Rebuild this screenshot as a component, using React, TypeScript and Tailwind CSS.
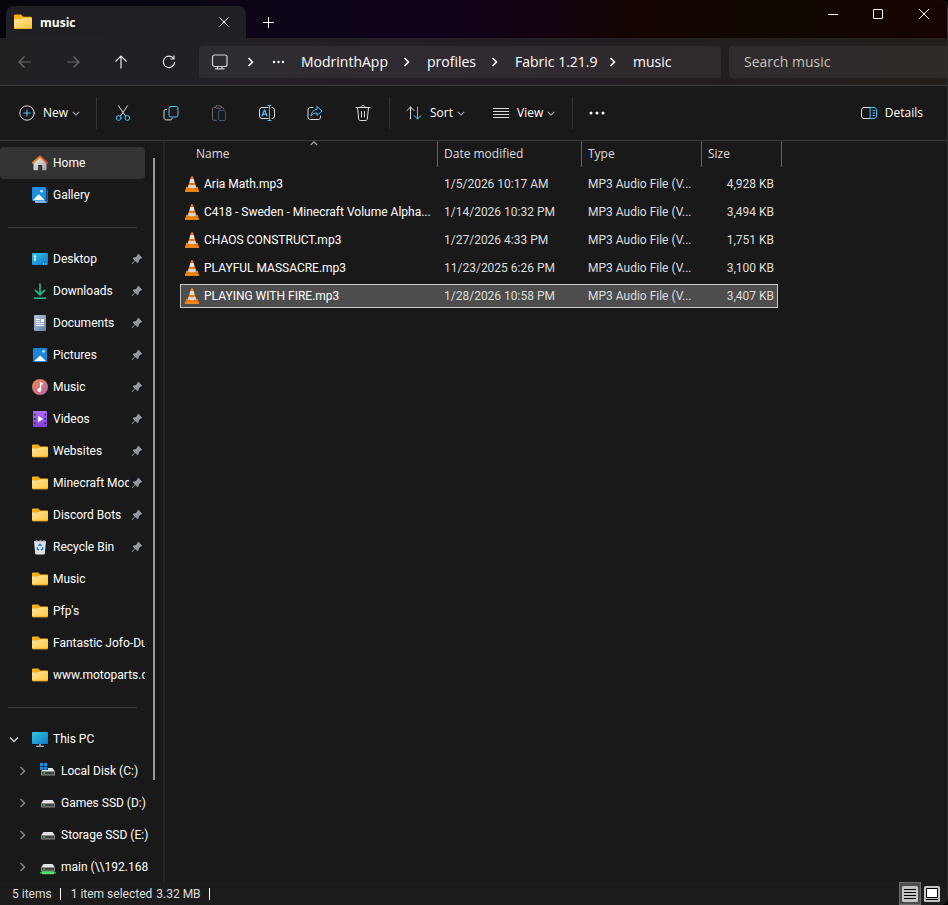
import type { ReactNode } from "react";
import clsx from "clsx";

type IconProps = { className?: string };

function FolderIcon({ className = "w-4 h-4" }: IconProps) {
  return (
    <svg viewBox="0 0 16 16" className={className}>
      <defs>
        <linearGradient id="folder" x1="0" y1="0" x2="1" y2="1">
          <stop offset="0" stopColor="#ffe7a2" />
          <stop offset="1" stopColor="#fcc433" />
        </linearGradient>
      </defs>
      <path d="M0 2.6C0 1.9.5 1.4 1.200 1.400H6.200L8.200 3.400H14.800C15.500 3.400 16 3.900 16 4.600V7H0Z" fill="#f9b010" />
      <path d="M0 5.600H6.300L8 4.300H15.200C15.700 4.300 16 4.600 16 5.100V13C16 13.700 15.500 14.200 14.800 14.200H1.200C.5 14.200 0 13.700 0 13Z" fill="url(#folder)" />
      <path d="M.2 13.700H15.800" stroke="#e9a822" strokeWidth=".8" />
    </svg>
  );
}

function HomeIcon() {
  return (
    <svg viewBox="0 0 16 16" className="w-4 h-4">
      <defs>
        <linearGradient id="wall" x1="0" y1="0" x2="1" y2="1">
          <stop offset="0" stopColor="#f2f2f2" />
          <stop offset="1" stopColor="#a3a3a3" />
        </linearGradient>
        <linearGradient id="roof" x1="0" y1="0" x2="1" y2="0">
          <stop offset="0" stopColor="#f09030" />
          <stop offset="1" stopColor="#d9480f" />
        </linearGradient>
      </defs>
      <path d="M1.500 7.500 8 1.800 14.500 7.500V14.500C14.500 15 14.200 15.300 13.700 15.300H10.200V10H6.200V15.300H2.300C1.800 15.300 1.500 15 1.500 14.500Z" fill="url(#wall)" />
      <path d="M1 7.800 8 1.400 15 7.800" fill="none" stroke="url(#roof)" strokeWidth="1.900" strokeLinecap="round" strokeLinejoin="round" />
    </svg>
  );
}

function GalleryIcon() {
  return (
    <svg viewBox="0 0 16 16" className="w-4 h-4">
      <rect x="3" y="2" width="13" height="14" rx="1.500" fill="#1464b8" />
      <path d="M3 14H14.500V16H4C3.400 16 3 15.600 3 15Z" fill="#7db5ee" />
      <path d="M14 1V14.500" stroke="#191919" />
      <rect x="0" y="0" width="14" height="14" rx="1" fill="#1b8fe0" />
      <path d="M1 13.200 5.800 8C6.300 7.500 7.200 7.500 7.700 8L12.700 13.200Z" fill="#fff" />
      <circle cx="9.600" cy="4.200" r="1.200" fill="#fff" />
    </svg>
  );
}

function DesktopIcon() {
  return (
    <svg viewBox="0 0 16 16" className="w-4 h-4">
      <defs>
        <linearGradient id="desk" x1="0" y1="0" x2="1" y2="1">
          <stop offset="0" stopColor="#31c5e8" />
          <stop offset="1" stopColor="#0f73c4" />
        </linearGradient>
      </defs>
      <rect x="0" y="2" width="16" height="12" rx="1" fill="url(#desk)" />
      <path d="M2 4.500H4V6.500H2ZM2 7.500H4V9.500H2Z" fill="#fff" />
      <path d="M11 12.500H12V13.500H11ZM13.500 12.500H14.500V13.500H13.500Z" fill="#d8ecfa" />
    </svg>
  );
}

function DownloadsIcon() {
  return (
    <svg viewBox="0 0 16 16" className="w-4 h-4" fill="none" stroke="#23b58b" strokeWidth="1.700">
      <path d="M8 .5V11.500M3 6.800 8 11.700 13 6.800" />
      <path d="M2 15.200H14" />
    </svg>
  );
}

function DocumentsIcon() {
  return (
    <svg viewBox="0 0 16 16" className="w-4 h-4">
      <defs>
        <linearGradient id="doc" x1="0" y1="0" x2="1" y2="1">
          <stop offset="0" stopColor="#b3c6da" />
          <stop offset="1" stopColor="#6482a6" />
        </linearGradient>
      </defs>
      <rect x="2" y="0" width="12" height="16" rx="1" fill="url(#doc)" />
      <path d="M4 4.500H8M4 6.500H8M4 8.500H12M4 10.500H12" stroke="#fff" />
      <rect x="9" y="4" width="3" height="3" fill="#fff" />
    </svg>
  );
}

function PicturesIcon() {
  return (
    <svg viewBox="0 0 16 16" className="w-4 h-4">
      <rect x="1" y="1" width="14" height="14" rx="1" fill="#1987d8" />
      <path d="M2.500 14 7.200 9.200C7.700 8.700 8.500 8.700 9 9.200L13.700 14Z" fill="#fff" />
      <circle cx="11.500" cy="4.500" r="1.200" fill="#fff" />
    </svg>
  );
}

function MusicIcon() {
  return (
    <svg viewBox="0 0 16 16" className="w-4 h-4">
      <defs>
        <linearGradient id="disc" x1="0" y1="0" x2="1" y2="1">
          <stop offset="0" stopColor="#f08a4e" />
          <stop offset="1" stopColor="#b565a8" />
        </linearGradient>
      </defs>
      <circle cx="8" cy="8" r="8" fill="url(#disc)" />
      <path d="M8.600 10.800V4L11 5.200" fill="none" stroke="#fff" strokeWidth="1.400" />
      <circle cx="7.300" cy="11" r="1.900" fill="#fff" />
    </svg>
  );
}

function VideosIcon() {
  return (
    <svg viewBox="0 0 16 16" className="w-4 h-4">
      <defs>
        <linearGradient id="film" x1="0" y1="0" x2="0" y2="1">
          <stop offset="0" stopColor="#b26bf0" />
          <stop offset="1" stopColor="#8443dd" />
        </linearGradient>
      </defs>
      <rect x="1" y="0" width="14" height="16" rx="1" fill="url(#film)" />
      <path d="M2.800 2.800V14M13.200 2.800V14" stroke="#3f1d7a" strokeWidth="1.600" strokeDasharray="1.800 2.400" />
      <path d="M6 4.800 11.200 8 6 11.200Z" fill="#fff" />
    </svg>
  );
}

function RecycleIcon() {
  return (
    <svg viewBox="0 0 16 16" className="w-4 h-4">
      <path d="M2 2H14L12.800 14.500C12.700 15.300 12.300 15.600 11.600 15.600H4.400C3.700 15.600 3.300 15.300 3.200 14.500Z" fill="#dfe3e6" />
      <path d="M2.500 2.500 4.500.8 6.500 2 8.500.8 10.500 2 12.500 1 13.700 2.500Z" fill="#8c9094" />
      <path d="M6.300 7 8 5.400 9.700 7M10.800 8.200 10.400 10.600H8.800M6.900 10.600H5.500L5.200 8.300" fill="none" stroke="#1a7fd6" strokeWidth="1.500" />
    </svg>
  );
}

function ThisPcIcon() {
  return (
    <svg viewBox="0 0 16 16" className="w-4 h-4">
      <defs>
        <linearGradient id="screen" x1="0" y1="0" x2="1" y2="1">
          <stop offset="0" stopColor="#2fcbe0" />
          <stop offset="1" stopColor="#1173c6" />
        </linearGradient>
      </defs>
      <rect x="0" y="1" width="16" height="12" rx=".8" fill="url(#screen)" />
      <path d="M7 13H9V15H7Z" fill="#7d8a95" />
      <path d="M4 15.300H12" stroke="#b4bfc8" strokeWidth="1.200" />
    </svg>
  );
}

function DriveIcon({ kind = "plain" }: { kind?: "plain" | "windows" | "network" }) {
  return (
    <svg viewBox="0 0 16 16" className="w-4 h-4">
      <path d="M3.500 5H12.500L15 8.500H1Z" fill="#e4e4e4" />
      <rect x="1" y="8" width="14" height="4.500" rx=".6" fill="#8a8a8a" />
      <rect x="2" y="9" width="12" height="2.500" fill="#444" />
      <rect x="3.500" y="9.500" width="1.400" height="1.400" fill="#38e04a" />
      {kind === "windows" && (
        <g fill="#1590ea">
          <path d="M0 0H8V7H0Z" fill="#191919" />
          <path d="M0 0H3.200V3H0ZM4 0H7.200V3H4ZM0 3.800H3.200V6.800H0ZM4 3.800H7.200V6.800H4Z" />
        </g>
      )}
      {kind === "network" && (
        <g>
          <rect x="0" y="13" width="16" height="1.600" fill="#2fa84a" />
          <rect x="2" y="12.300" width="12" height="3" rx=".8" fill="#4fe06c" />
        </g>
      )}
    </svg>
  );
}

function PinIcon() {
  return (
    <svg viewBox="0 0 12 12" className="w-3 h-3 shrink-0">
      <path d="M7.300.8 11.200 4.700 10.300 5.700 9.500 5.600 7.700 7.500 7.600 9.500 6.600 10.300 4.300 8 1.300 11.100.7 10.900.9 10.200 3.800 7.400 1.700 5.300 2.500 4.400 4.600 4.300 6.400 2.500 6.300 1.700Z" fill="#939ca3" />
    </svg>
  );
}

function ConeIcon() {
  return (
    <svg viewBox="0 0 16 16" className="w-4 h-4 shrink-0">
      <path d="M2.200 10.800H13.800L15 15C15.100 15.400 14.900 15.700 14.500 15.700H1.500C1.100 15.700.9 15.400 1 15Z" fill="#e8760a" />
      <path d="M1 14.500H15V15.700H1Z" fill="#f79a1c" />
      <path d="M7.200.3H8.800L12.500 12.200C11 13.800 5 13.800 3.500 12.200Z" fill="#f07c0c" />
      <path d="M6.400 3H9.600L10.600 6.200C9.500 7.200 6.500 7.200 5.400 6.200Z" fill="#e3e3e3" />
      <path d="M4.800 8.400C6.500 9.400 9.500 9.400 11.200 8.400L12.100 11.300C10.500 12.700 5.500 12.700 3.900 11.300Z" fill="#d6d6d6" />
    </svg>
  );
}

const chevronPaths = {
  right: "M3.500 1 7.500 5 3.500 9",
  down: "M1 3.500 5 7.500 9 3.500",
  up: "M1 5 5 1 9 5",
};

function Chevron({ dir = "right", className = "w-2.5 h-2.5" }: { dir?: keyof typeof chevronPaths; className?: string }) {
  return (
    <svg viewBox="0 0 10 10" className={clsx("shrink-0", className)} fill="none" stroke="currentColor" strokeWidth="1.500">
      <path d={chevronPaths[dir]} />
    </svg>
  );
}

function Line({ children }: { children: ReactNode }) {
  return (
    <svg viewBox="0 0 16 16" className="w-4 h-4 shrink-0" fill="none" stroke="#dcdcdc" strokeLinecap="round" strokeLinejoin="round">
      {children}
    </svg>
  );
}

const BLUE = "#4cc2ff";

const toolIcons = [
  {
    label: "Cut",
    icon: (
      <Line>
        <path d="M3.500.8 10.600 11.200M12.500.8 5.400 11.200" />
        <circle cx="3.700" cy="13" r="2.400" stroke={BLUE} />
        <circle cx="12.300" cy="13" r="2.400" stroke={BLUE} />
      </Line>
    ),
  },
  {
    label: "Copy",
    icon: (
      <Line>
        <path d="M3.500 4.500H2.600C1.700 4.500 1 5.200 1 6.100V12.500C1 13.900 2 14.900 3.400 14.900H7.600C8.500 14.900 9.200 14.200 9.200 13.300" />
        <rect x="6" y="1.500" width="9" height="10.500" rx="1.800" stroke={BLUE} />
      </Line>
    ),
  },
  {
    label: "Paste",
    icon: (
      <Line>
        <g opacity=".4">
          <path d="M4.500 2.500H2.800C2 2.500 1.500 3 1.500 3.800V14C1.500 14.800 2 15.300 2.800 15.300H5.500M10.500 2.500H11.500C12.300 2.500 12.800 3 12.800 3.800V4" />
          <rect x="4.500" y=".8" width="6" height="2.600" rx="1.300" />
          <rect x="7.500" y="5.500" width="7" height="10" rx="1.300" stroke={BLUE} />
        </g>
      </Line>
    ),
  },
  {
    label: "Rename",
    icon: (
      <Line>
        <path d="M9 2.500H3C1.600 2.500.5 3.600.5 5V11C.5 12.400 1.600 13.500 3 13.500H9M13 2.500C14.400 2.500 15.500 3.600 15.500 5V11C15.500 12.400 14.400 13.500 13 13.500" />
        <path d="M9 .5H12M9 15.500H12M10.500.5V15.500" stroke={BLUE} />
        <path d="M3 11 5.500 4.800 8 11M3.800 9.200H7.200" stroke={BLUE} strokeWidth="1.200" />
      </Line>
    ),
  },
  {
    label: "Share",
    icon: (
      <Line>
        <path d="M6 2.500H3.500C2 2.500 1 3.500 1 5V12C1 13.500 2 14.500 3.500 14.500H11C12.500 14.500 13.500 13.500 13.500 12V11" />
        <path d="M10 1.500 15 6 10 10.500V8C7.500 7.800 5.500 8.800 4 11 4.200 7.500 6.300 4.700 10 4.200Z" stroke={BLUE} />
      </Line>
    ),
  },
  {
    label: "Delete",
    icon: (
      <Line>
        <path d="M1 2.500H15M2.500 2.500 3.700 14C3.800 14.900 4.400 15.500 5.200 15.500H10.800C11.600 15.500 12.200 14.900 12.300 14L13.500 2.500M6 2.500C6 1.200 6.800.5 8 .5S10 1.200 10 2.500M6.500 6.500V12M9.500 6.500V12" />
      </Line>
    ),
  },
];

const pinned = [
  { label: "Desktop", icon: <DesktopIcon />, pin: true },
  { label: "Downloads", icon: <DownloadsIcon />, pin: true },
  { label: "Documents", icon: <DocumentsIcon />, pin: true },
  { label: "Pictures", icon: <PicturesIcon />, pin: true },
  { label: "Music", icon: <MusicIcon />, pin: true },
  { label: "Videos", icon: <VideosIcon />, pin: true },
  { label: "Websites", icon: <FolderIcon />, pin: true },
  { label: "Minecraft Mods", icon: <FolderIcon />, pin: true },
  { label: "Discord Bots", icon: <FolderIcon />, pin: true },
  { label: "Recycle Bin", icon: <RecycleIcon />, pin: true },
  { label: "Music", icon: <FolderIcon /> },
  { label: "Pfp's", icon: <FolderIcon /> },
  { label: "Fantastic Jofo-Du", icon: <FolderIcon /> },
  { label: "www.motoparts.c", icon: <FolderIcon /> },
];

const drives = [
  { label: "Local Disk (C:)", icon: <DriveIcon kind="windows" /> },
  { label: "Games SSD (D:)", icon: <DriveIcon /> },
  { label: "Storage SSD (E:)", icon: <DriveIcon /> },
  { label: "main (\\\\192.168", icon: <DriveIcon kind="network" /> },
];

const files = [
  { name: "Aria Math.mp3", date: "1/5/2026 10:17 AM", size: "4,928 KB" },
  { name: "C418 - Sweden - Minecraft Volume Alpha...", date: "1/14/2026 10:32 PM", size: "3,494 KB" },
  { name: "CHAOS CONSTRUCT.mp3", date: "1/27/2026 4:33 PM", size: "1,751 KB" },
  { name: "PLAYFUL MASSACRE.mp3", date: "11/23/2025 6:26 PM", size: "3,100 KB" },
  { name: "PLAYING WITH FIRE.mp3", date: "1/28/2026 10:58 PM", size: "3,407 KB", selected: true },
];

function TitleBar() {
  return (
    <header className="flex h-[38px] shrink-0 items-start bg-[linear-gradient(90deg,#07060d,#0c0516_28%,#10021a_45%,#120210_58%,#140500_68%,#100900_82%,#160300)]">
      <div className="ml-1.5 mt-1.5 flex h-8 w-60 items-center rounded-t-lg bg-[#202024] pl-2 pr-3">
        <FolderIcon className="w-[18px] h-[18px]" />
        <span className="ml-2 flex-1 pt-0.5 text-[12px] font-bold text-white">music</span>
        <button aria-label="Close tab" className="flex w-5 h-5 items-center justify-center text-white">
          <svg viewBox="0 0 10 10" className="w-2.5 h-2.5" stroke="currentColor"><path d="M.5.5 9.500 9.500M9.500.5.5 9.500" /></svg>
        </button>
      </div>
      <button aria-label="New tab" className="mt-1.5 ml-2.5 flex w-6 h-8 items-center justify-center text-white">
        <svg viewBox="0 0 11 11" className="w-[11px] h-[11px]" stroke="currentColor"><path d="M5.500 0V11M0 5.500H11" /></svg>
      </button>
      <div className="ml-auto flex text-white">
        <button aria-label="Minimize" className="flex w-[45px] h-[27px] items-center justify-center">
          <svg viewBox="0 0 10 10" className="w-2.5 h-2.5" stroke="currentColor"><path d="M0 5.500H10" /></svg>
        </button>
        <button aria-label="Maximize" className="flex w-[45px] h-[27px] items-center justify-center">
          <svg viewBox="0 0 10 10" className="w-2.5 h-2.5" fill="none" stroke="currentColor"><rect x=".5" y=".5" width="9" height="9" rx=".5" /></svg>
        </button>
        <button aria-label="Close" className="flex w-[47px] h-[27px] items-center justify-center">
          <svg viewBox="0 0 10 10" className="w-2.5 h-2.5" stroke="currentColor"><path d="M0 0 10 10M10 0 0 10" /></svg>
        </button>
      </div>
    </header>
  );
}

function AddressBar() {
  return (
    <div className="flex h-12 shrink-0 items-center border-b border-[#3c3c3c] bg-linear-to-r from-[#212124] via-[#241d26] via-50% to-[#241e1b]">
      <div className="flex w-[199px] shrink-0 items-center pl-px text-[#e8e8e8]">
        <button aria-label="Back" className="flex w-12 h-8 items-center justify-center text-[#6c6b6e]">
          <svg viewBox="0 0 14 14" className="w-3.5 h-3.5" fill="none" stroke="currentColor" strokeWidth="1.200"><path d="M13 7H1M6.500 1.500 1 7 6.500 12.500" /></svg>
        </button>
        <button aria-label="Forward" className="flex w-12 h-8 items-center justify-center text-[#6c6b6e]">
          <svg viewBox="0 0 14 14" className="w-3.5 h-3.5" fill="none" stroke="currentColor" strokeWidth="1.200"><path d="M1 7H13M7.500 1.500 13 7 7.500 12.500" /></svg>
        </button>
        <button aria-label="Up" className="flex w-12 h-8 items-center justify-center">
          <svg viewBox="0 0 14 14" className="w-3.5 h-3.5" fill="none" stroke="currentColor" strokeWidth="1.200"><path d="M7 13.500V1M1.500 6.500 7 1 12.500 6.500" /></svg>
        </button>
        <button aria-label="Refresh" className="flex w-12 h-8 items-center justify-center">
          <svg viewBox="0 0 14 14" className="w-3.5 h-3.5" fill="none" stroke="currentColor" strokeWidth="1.200"><path d="M11.500 3.300A5.700 5.700 0 1 0 12.700 7M12 .5V4H8.500" /></svg>
        </button>
      </div>
      <nav className="flex h-8 flex-1 items-center rounded bg-white/6 pl-3 text-[14px] text-white">
        <button aria-label="Location">
          <svg viewBox="0 0 18 18" className="w-[18px] h-[18px]" fill="none" stroke="#d0d0d0" strokeWidth="1.200">
            <rect x="1.500" y="2" width="14.500" height="11.500" rx="2" />
            <path d="M6.500 13.500V15.500M11 13.500V15.500M4 15.800H13.500" />
          </svg>
        </button>
        <Chevron className="ml-4 w-2.5 h-2.5" />
        <button aria-label="More folders" className="ml-4">
          <svg viewBox="0 0 14 4" className="w-3.5 h-1" fill="currentColor"><circle cx="3" cy="2" r="1.200" /><circle cx="7.500" cy="2" r="1.200" /><circle cx="12" cy="2" r="1.200" /></svg>
        </button>
        <button className="ml-4 w-[84px] text-left">ModrinthApp</button>
        <Chevron className="ml-4 w-2.5 h-2.5" />
        <button className="ml-4 w-[46px] text-left">profiles</button>
        <Chevron className="ml-4 w-2.5 h-2.5" />
        <button className="ml-4 w-[76px] whitespace-nowrap text-left">Fabric 1.21.9</button>
        <Chevron className="ml-4 w-2.5 h-2.5" />
        <button className="ml-4">music</button>
      </nav>
      <input
        type="search"
        aria-label="Search"
        placeholder="Search music"
        className="ml-2 h-8 w-[218px] rounded-l bg-white/6 pl-[15px] text-[14px] text-white outline-none placeholder:text-[#c5c2c0]"
      />
    </div>
  );
}

function Toolbar() {
  return (
    <div className="flex h-[55px] shrink-0 items-center border-b border-[#3a3a3a] text-[12px] text-white">
      <button className="flex h-8 w-[96px] items-center pl-[19px]">
        <Line>
          <circle cx="8" cy="8" r="7.200" />
          <path d="M8 4.800V11.200M4.800 8H11.200" stroke={BLUE} />
        </Line>
        <span className="ml-2">New</span>
        <Chevron dir="down" className="ml-1 w-2 h-2 text-[#a5a5a5]" />
      </button>
      <div className="h-8 w-px bg-[#333]" />
      <div className="flex px-0.5">
        {toolIcons.map((t) => (
          <button key={t.label} aria-label={t.label} className="flex h-8 w-12 items-center justify-center">
            {t.icon}
          </button>
        ))}
      </div>
      <div className="h-8 w-px bg-[#333]" />
      <button className="flex h-8 w-[87px] items-center pl-4">
        <Line>
          <path d="M4.500 14V2M1 5.500 4.500 2 8 5.500" />
          <path d="M11.500 2V14M8 10.500 11.500 14 15 10.500" stroke={BLUE} />
        </Line>
        <span className="ml-2">Sort</span>
        <Chevron dir="down" className="ml-1 w-2 h-2 text-[#a5a5a5]" />
      </button>
      <button className="flex h-8 w-[95px] items-center pl-4">
        <Line><path d="M0 3.500H16M0 6.500H16M0 9.500H16M0 12.500H16" /></Line>
        <span className="ml-2">View</span>
        <Chevron dir="down" className="ml-1 w-2 h-2 text-[#a5a5a5]" />
      </button>
      <div className="h-8 w-px bg-[#333]" />
      <button aria-label="See more" className="flex h-8 w-12 items-center justify-center">
        <svg viewBox="0 0 16 4" className="w-4 h-1" fill="currentColor"><circle cx="2" cy="2" r="1.500" /><circle cx="8" cy="2" r="1.500" /><circle cx="14" cy="2" r="1.500" /></svg>
      </button>
      <button className="ml-auto mr-6 flex h-8 items-center">
        <Line>
          <path d="M10 2.500H3C1.600 2.500.5 3.600.5 5V11C.5 12.400 1.600 13.500 3 13.500H10" />
          <path d="M9.500 2.500H13C14.400 2.500 15.500 3.600 15.500 5V11C15.500 12.400 14.400 13.500 13 13.500H9.500ZM12 5.500H13.500M12 8H13.500M12 10.500H13.500" stroke={BLUE} />
        </Line>
        <span className="ml-2">Details</span>
      </button>
    </div>
  );
}

function NavItem({ icon, label, pin, active }: { icon: ReactNode; label: string; pin?: boolean; active?: boolean }) {
  return (
    <a
      href="#"
      className={clsx("flex h-8 items-center pl-8", active && "rounded-sm bg-[#333]")}
    >
      <span className="shrink-0">{icon}</span>
      <span className="ml-[5px] flex-1 overflow-hidden whitespace-nowrap">{label}</span>
      {pin && <span className="ml-0.5 mr-0.5"><PinIcon /></span>}
    </a>
  );
}

function Sidebar() {
  return (
    <aside className="flex w-[165px] shrink-0 overflow-hidden border-r-2 border-[#262626]">
      <nav className="h-0 w-[145px] pt-1.5 font-['Roboto','Open_Sans',sans-serif] text-[12px] text-white">
        <NavItem icon={<HomeIcon />} label="Home" active />
        <NavItem icon={<GalleryIcon />} label="Gallery" />
        <hr className="mt-4 mb-[15px] mx-2 border-[#3a3a3a]" />
        {pinned.map((p, i) => (
          <NavItem key={i} {...p} />
        ))}
        <hr className="mt-4 mb-[15px] mx-2 border-[#3a3a3a]" />
        <a href="#" className="flex h-8 items-center pl-[9px]">
          <Chevron dir="down" className="w-2.5 h-2.5 text-[#d0d0d0]" />
          <span className="ml-[13px]"><ThisPcIcon /></span>
          <span className="ml-[5px]">This PC</span>
        </a>
        {drives.map((d) => (
          <a key={d.label} href="#" className="flex h-8 items-center pl-[17px]">
            <Chevron className="w-2.5 h-2.5 text-[#8a8a8a]" />
            <span className="ml-[13px] shrink-0">{d.icon}</span>
            <span className="ml-[5px] whitespace-nowrap">{d.label}</span>
          </a>
        ))}
      </nav>
      <div className="ml-2 mt-[17px] h-[622px] w-0.5 bg-[#9a9a9a]" />
    </aside>
  );
}

function FileTable() {
  return (
    <table className="ml-[15px] w-[602px] table-fixed border-separate border-spacing-0 text-left text-[12px]">
      <thead>
        <tr className="h-[26px] text-[#dedede]">
          <th className="relative w-[258px] border-r border-[#636363] p-0 pl-4 font-normal">
            Name
            <span className="absolute inset-x-0 top-0 flex justify-center pl-2.5">
              <Chevron dir="up" className="w-2 h-2 text-[#a5a5a5]" />
            </span>
          </th>
          <th className="w-[144px] border-r border-[#636363] p-0 pl-1.5 font-normal">Date modified</th>
          <th className="w-[120px] border-r border-[#636363] p-0 pl-1.5 font-normal">Type</th>
          <th className="w-20 border-r border-[#636363] p-0 pl-1.5 font-normal">Size</th>
        </tr>
        <tr className="h-[3px]" />
      </thead>
      <tbody className="font-['Roboto','Open_Sans',sans-serif] text-[#dedede]">
        {files.map((f) => {
          const cell = clsx("flex h-6 items-center whitespace-nowrap border-y", f.selected ? "border-[#c8c8c8] bg-[#4d4d4d]" : "border-transparent");
          return (
            <tr key={f.name} className="h-7">
              <td className="p-0">
                <div className={clsx(cell, "border-l pl-[3px] text-white")}>
                  <ConeIcon />
                  <span className="ml-1">{f.name}</span>
                </div>
              </td>
              <td className="p-0"><div className={clsx(cell, "pl-1.5")}>{f.date}</div></td>
              <td className="p-0"><div className={clsx(cell, "pl-1.5")}>MP3 Audio File (V...</div></td>
              <td className="p-0 pr-1"><div className={clsx(cell, "justify-end border-r pr-[3px]")}>{f.size}</div></td>
            </tr>
          );
        })}
      </tbody>
    </table>
  );
}

function StatusBar() {
  return (
    <footer className="flex h-[23px] shrink-0 items-center bg-[#1c1c1c] pl-3 font-['Roboto','Open_Sans',sans-serif] text-[12px] text-[#dedede]">
      <span>5 items</span>
      <span className="ml-2 h-3 w-px bg-white" />
      <span className="ml-2.5">1 item selected</span>
      <span className="ml-1">3.32 MB</span>
      <span className="ml-2 h-3 w-px bg-white" />
      <div className="ml-auto mr-[7px] flex items-center">
        <button aria-label="Details view" className="flex w-[22px] h-[23px] items-center justify-center border border-[#6b6b6b] bg-[#4d4d4d]">
          <svg viewBox="0 0 16 16" className="w-4 h-4"><rect width="16" height="16" rx="1.500" fill="#c4c4c4" /><path d="M2 3.500H14M2 6.500H14M2 9.500H14M2 12.500H14" stroke="#000" /></svg>
        </button>
        <button aria-label="Large icons view" className="ml-[3px]">
          <svg viewBox="0 0 16 16" className="w-4 h-4"><rect width="16" height="16" rx="1.500" fill="#c4c4c4" /><rect x="2.500" y="2.500" width="11" height="9" fill="#fff" stroke="#000" /><path d="M2 13.500H14" stroke="#000" /></svg>
        </button>
      </div>
    </footer>
  );
}

export default function App() {
  return (
    <div className="bg-black">
      <div className="flex h-screen flex-col overflow-hidden rounded-r-lg border-r border-[#2e2e2e] bg-[#191919] font-['Open_Sans','Noto_Sans',sans-serif]">
        <TitleBar />
        <AddressBar />
        <Toolbar />
        <div className="flex min-h-0 flex-1">
          <Sidebar />
          <main className="min-w-0 flex-1">
            <FileTable />
          </main>
        </div>
        <StatusBar />
      </div>
    </div>
  );
}
